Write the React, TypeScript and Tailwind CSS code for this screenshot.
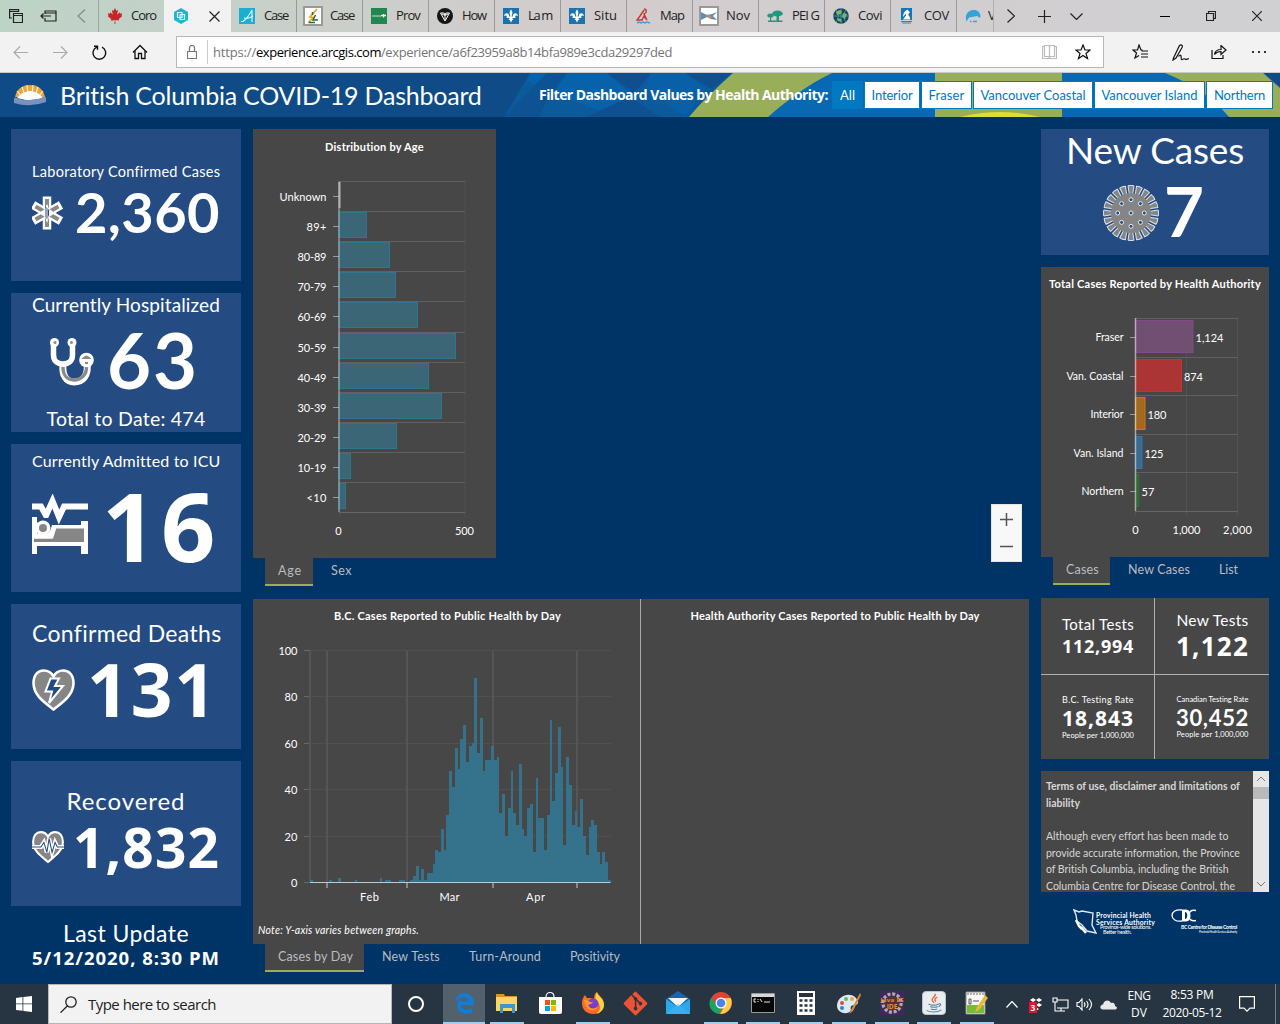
import React, { useLayoutEffect, useRef, useState } from 'react';
import { FaCanadianMapleLeaf, FaEdgeLegacy, FaGitAlt, FaJava } from 'react-icons/fa';

/** Single-line label whose tracking is adjusted so that it fills a given width. */
function Fit({ w, className = '', children }: { w: number; className?: string; children: string }) {
  const ref = useRef<HTMLSpanElement>(null);
  const [gap, setGap] = useState(0);
  useLayoutEffect(() => {
    const el = ref.current;
    if (!el) return;
    const natural = el.getBoundingClientRect().width - gap * children.length;
    setGap((w - natural) / children.length);
  }, [w, children]);
  return (
    <span ref={ref} className={`inline-block shrink-0 whitespace-nowrap ${className}`} style={{ letterSpacing: `${gap}px` }}>
      {children}
    </span>
  );
}

/* ---------- Browser chrome ---------- */

const line = { fill: 'none', stroke: 'currentColor', strokeWidth: 1.2 } as const;

function Fleur() {
  return (
    <svg viewBox="0 0 16 16" className="size-4 bg-[#1a72ae]">
      <path
        fill="#fff"
        d="M8 1.500C6.600 3.200 6.200 4.600 7 6.500l.4 2H6.200C6.400 6.500 5.300 5.300 3.700 5.300 2 5.300 1 6.700 1.300 8.200c.5-.9 1.600-1 2.200-.3.5.6.4 1.500-.2 2h3.300c-.1 1-.6 1.700-1.300 2.200l1.500-.2L8 14.700l1.200-2.800 1.500.2c-.7-.5-1.200-1.200-1.300-2.200h3.300c-.6-.5-.7-1.400-.2-2 .6-.7 1.700-.6 2.200.3.300-1.500-.7-2.900-2.400-2.900-1.600 0-2.700 1.200-2.500 3.200H8.600l.4-2c.8-1.900.4-3.300-1-5z"
      />
    </svg>
  );
}

const tabs: { label: string; w: number; icon: React.ReactNode }[] = [
  {
    label: 'Case',
    w: 24,
    icon: (
      <svg viewBox="0 0 16 16" className="size-4 bg-[#19aed3]">
        <path d="M2 13.500h2c3-2 6-6 9-11.500v12M5 10c3 1 6 0 9-2" fill="none" stroke="#e9fbff" strokeWidth="1.100" />
      </svg>
    ),
  },
  {
    label: 'Case',
    w: 24,
    icon: (
      <svg viewBox="0 0 16 16" className="size-5 shrink-0 border-2 border-[#999] bg-white">
        <path d="M12 1 5 9l3 .5L3 15" fill="none" stroke="#e7a92e" strokeWidth="1.800" />
        <path d="M7.500 4v3M10.500 7 8 12h5M4 14.500h6" fill="none" stroke="#27693d" strokeWidth="1.500" />
      </svg>
    ),
  },
  {
    label: 'Prov',
    w: 24,
    icon: (
      <svg viewBox="0 0 16 16" className="size-4 bg-[#22864f]">
        <path d="M1 8h9" stroke="#bfe3cc" strokeWidth="1" />
        <path d="M10 7.500h5M12.500 6v3.500" stroke="#fff" strokeWidth="1.300" />
      </svg>
    ),
  },
  {
    label: 'How',
    w: 24,
    icon: (
      <svg viewBox="0 0 16 16" className="size-4">
        <circle cx="8" cy="8" r="8" fill="#161616" />
        <path d="M3.500 5h3.600L8 7l.9-2h3.600L8 13zM5 6l3 1.500L11 6M8 7.500V12" fill="none" stroke="#fff" strokeWidth="1" />
      </svg>
    ),
  },
  { label: 'La m', w: 24, icon: <Fleur /> },
  { label: 'Situ', w: 23, icon: <Fleur /> },
  {
    label: 'Map',
    w: 24,
    icon: (
      <svg viewBox="0 0 16 16" className="size-4">
        <path d="M9 1c3 0 3 4 0 5l3 6M9 2 5 8l-3 4h5l2-4 3 4" fill="none" stroke="#c13a36" strokeWidth="1.400" />
        <path d="m2 15 2-1 2 1 2-1 2 1 2-1 3 1" fill="none" stroke="#4a9ad4" strokeWidth="1.500" />
      </svg>
    ),
  },
  {
    label: 'Nov',
    w: 24,
    icon: (
      <svg viewBox="0 0 16 16" className="size-5 shrink-0 border-2 border-[#999] bg-white">
        <path d="M0 4v8l6-3 4 2 6 1-4-4 4-4-5 2-5 1z" fill="#5e8db8" />
        <path d="m6 7 4 3" stroke="#e0864a" strokeWidth="2" />
      </svg>
    ),
  },
  {
    label: 'PEI G',
    w: 27,
    icon: (
      <svg viewBox="0 0 16 16" className="size-4">
        <ellipse cx="10.500" cy="5.500" rx="5.300" ry="3" fill="#1f9a7d" />
        <ellipse cx="3.500" cy="7.500" rx="3.200" ry="2" fill="#1f9a7d" />
        <path d="M9.500 7h2.500v5.500h3.500V14H1v-1.500h2V9h1.200v3.500h5.300z" fill="#1f9a7d" />
      </svg>
    ),
  },
  {
    label: 'Covi',
    w: 24,
    icon: (
      <svg viewBox="0 0 16 16" className="size-4">
        <circle cx="8" cy="8" r="7.800" fill="#174a55" />
        <path d="M3 4c2-2 5-2 6-1L8 6l-4 1zm7 1 4 1-2 5-3-2zM4 10l4 1 1 3-4-1z" fill="#8cb85c" />
        <path d="M8 0v16M0 8h16M3 2c3 4 3 8 0 12M13 2c-3 4-3 8 0 12" fill="none" stroke="#58a8c8" strokeWidth=".7" />
      </svg>
    ),
  },
  {
    label: 'COV',
    w: 25,
    icon: (
      <svg viewBox="0 0 16 16" className="size-4">
        <path d="M2 0h11v12H2z" fill="#1577b5" />
        <path d="M8.500 1.500C6 3 4 5 4 9l3-3.500v2L4 11.500h7c1-3-2.500-3.500-1.500-6l1.500-1z" fill="#fff" />
        <path d="M2 13.500h11M3 15h9" stroke="#2988be" strokeWidth="1" />
      </svg>
    ),
  },
];

function TabBar() {
  return (
    <div className="flex h-8 shrink-0 bg-linear-to-r from-[#bdd3c6] via-[#d3cccd] via-45% to-[#d0d0d2] font-['Open_Sans',sans-serif] text-[13px] text-[#222]">
      <div className="flex w-[98px] items-center pl-[9px]">
        <svg viewBox="0 0 14 14" className="size-[14px]" {...line}>
          <path d="M3 9H.6V.6h9V3M4.500 4.500h9v9h-9zM4.500 6.500h9M.6 2.500h9" />
        </svg>
        <svg viewBox="0 0 17 12" className="ml-[17px] h-3 w-[17px]" {...line}>
          <path d="M5 4V1h11v10H5V8M5 3h11M11 6H1M3.500 3.500 1 6l2.500 2.500" />
        </svg>
        <svg viewBox="0 0 9 14" className="ml-5 h-[14px] w-[9px] text-[#888]" {...line}>
          <path d="M8 .5 1 7l7 6.500" />
        </svg>
      </div>
      <div className="flex w-[66px] items-center border-l border-[#9da5a1] pl-[8px]">
        <FaCanadianMapleLeaf className="size-4 shrink-0 text-[#c9242b]" />
        <Fit w={25} className="ml-[8px]">Coro</Fit>
      </div>
      <div className="flex w-[67px] items-center justify-between bg-[#f2f2f2] pr-[11px] pl-[9px]">
        <svg viewBox="0 0 16 16" className="size-4">
          <path d="m8 0 7 4v8l-7 4-7-4V4z" fill="#1eb5cf" />
          <path d="M4.500 4.500H9v5H4.500zM7 6.500h4.500v5H7z" fill="none" stroke="#d9f8fc" strokeWidth="1.200" />
        </svg>
        <svg viewBox="0 0 11 11" className="size-[11px]" {...line}>
          <path d="m.5.5 10 10M10.500.5l-10 10" />
        </svg>
      </div>
      {tabs.map((t, i) => (
        <div key={i} className="flex w-[66px] items-center border-r border-[#9a9a9c] pl-[8px]">
          <span className="flex w-4 shrink-0 justify-center">{t.icon}</span>
          <Fit w={t.w} className="ml-[9px]">{t.label}</Fit>
        </div>
      ))}
      <div className="flex w-[37px] items-center border-r border-[#b0b0b0] pl-[8px]">
        <svg viewBox="0 0 16 14" className="h-[14px] w-4 shrink-0">
          <path d="M1.500 12.500C-1 5 4 1 9 1c4.500 0 7.500 4 6 8l-3-2-8 1.500z" fill="#35a2d8" />
          <path d="M5 12.500h1.500M8 12.500h4" stroke="#35a2d8" strokeWidth="1.500" />
        </svg>
        <span className="ml-[7px] w-[5px] overflow-hidden">V</span>
      </div>
      <div className="flex flex-1 items-center pl-[13px]">
        <svg viewBox="0 0 8 14" className="h-[14px] w-2" {...line}>
          <path d="m.5.5 7 6.500-7 6.500" />
        </svg>
        <svg viewBox="0 0 13 13" className="ml-[23px] size-[13px]" {...line}>
          <path d="M6.500 0v13M0 6.500h13" />
        </svg>
        <svg viewBox="0 0 13 7" className="ml-[19px] h-[7px] w-[13px]" {...line}>
          <path d="m.5.5 6 6 6-6" />
        </svg>
        <span className="ml-auto h-px w-[10px] bg-black" />
        <svg viewBox="0 0 10 10" className="ml-9 size-[10px]" {...line}>
          <path d="M.5 2.500h7v7h-7zM2.500 2.500v-2h7v7h-2" />
        </svg>
        <svg viewBox="0 0 10 10" className="mr-[18px] ml-9 size-[10px]" {...line}>
          <path d="m0 0 10 10M10 0 0 10" />
        </svg>
      </div>
    </div>
  );
}

function AddressBar() {
  return (
    <div className="flex h-[41px] shrink-0 items-center border-b border-[#c9c9c9] bg-[#f2f2f2] font-['Open_Sans',sans-serif]">
      <svg viewBox="0 0 15 13" className="ml-[13px] h-[13px] w-[15px] text-[#aaa]" {...line}>
        <path d="M15 6.500H1M7 .5l-6 6 6 6" />
      </svg>
      <svg viewBox="0 0 15 13" className="ml-[25px] h-[13px] w-[15px] text-[#aaa]" {...line}>
        <path d="M0 6.500h14M8 .5l6 6-6 6" />
      </svg>
      <svg viewBox="0 0 15 15" className="ml-[24px] size-[15px] text-[#111]" fill="none" stroke="currentColor" strokeWidth="1.400">
        <path d="M4.700 2.200A6.300 6.300 0 1 0 10 2.200M2 1.200h3.500v3.500" />
      </svg>
      <svg viewBox="0 0 16 16" className="ml-[25px] size-4 text-[#111]" fill="none" stroke="currentColor" strokeWidth="1.300">
        <path d="m1 8.500 7-7 7 7M3 7v7.500h3.500v-5h3v5H13V7" />
      </svg>
      <div className="ml-[28px] flex h-8 w-[928px] items-center border border-[#b9b9b9] bg-white">
        <svg viewBox="0 0 10 14" className="ml-[10px] h-[14px] w-[10px] text-[#777]" {...line}>
          <path d="M.5 6.500h9v7h-9zM2.500 6.500V3a2.500 2.500 0 0 1 5 0v3.500" />
        </svg>
        <span className="ml-[10px] h-6 w-px bg-[#ccc]" />
        <span className="ml-[5px] flex pt-px text-[13px] text-[#757575]">
          <Fit w={43}>https://</Fit>
          <Fit w={125} className="text-black">experience.arcgis.com</Fit>
          <Fit w={291}>/experience/a6f23959a8b14bfa989e3cda29297ded</Fit>
        </span>
        <svg viewBox="0 0 15 14" className="ml-auto h-[14px] w-[15px] text-[#bcbcbc]" {...line}>
          <path d="M2 1.500H.5v12h14v-12H13M2.500.5h4l1 1 1-1h4v11h-4l-1 1-1-1h-4zM7.500 1.500v11" />
        </svg>
        <svg viewBox="0 0 16 16" className="mr-[12px] ml-[18px] size-4 text-[#111]" {...line}>
          <path d="m8 1 2 5h5l-4 3.500 1.500 5L8 11.500l-4.500 3L5 9.500 1 6h5z" />
        </svg>
      </div>
      <svg viewBox="0 0 17 16" className="ml-[28px] h-4 w-[17px] text-[#111]" {...line}>
        <path d="M10.500 6H9L7 1 5.500 6H1l3.500 3L3 14l4-2.500M9.500 7H16M9 10h7M9 13h7" />
      </svg>
      <svg viewBox="0 0 17 17" className="ml-[23px] size-[17px] text-[#111]" {...line}>
        <path d="M1.500 14 7.500 1.500c2-1.500 3.500 0 2.500 2L4 14l-3 2zM6.500 12.500c4-4 2 2.500 3 3s2-1.500 3.500-.5 2 .5 4-.5" />
      </svg>
      <svg viewBox="0 0 16 14" className="ml-[22px] h-[14px] w-4 text-[#111]" {...line}>
        <path d="M1 5v8.500h11V10M3.500 9.500C4 6 6 4.500 10 4.500v-4L15 5l-5 4.500v-3C7 6.500 5 7.500 3.500 9.500z" />
      </svg>
      <span className="ml-[25px] flex gap-1">
        <i className="size-[2px] bg-[#333]" />
        <i className="size-[2px] bg-[#333]" />
        <i className="size-[2px] bg-[#333]" />
      </span>
    </div>
  );
}

/* ---------- Dashboard header ---------- */

const filters = [
  { name: 'Interior', box: 'w-[56px]', w: 41 },
  { name: 'Fraser', box: 'w-[51px]', w: 36 },
  { name: 'Vancouver Coastal', box: 'w-[120px]', w: 105 },
  { name: 'Vancouver Island', box: 'w-[111px]', w: 96 },
  { name: 'Northern', box: 'w-[67px]', w: 51 },
];

function Header() {
  return (
    <header className="relative flex h-[44px] shrink-0 items-center bg-[#0f4c87] text-white">
      <svg viewBox="0 0 1280 44" className="absolute inset-0 h-[44px] w-[1280px]">
        <path d="M530 0h750v44H504z" fill="#0b5a9c" />
        <path d="m530 0 77 0 27 24-20 20-60-24-27-12z" fill="#0862aa" />
        <path d="m607 0h44l-17 20z" fill="#0f4f8d" />
        <path d="m547 28 20-28h-20l-43 44h35z" fill="#0d5393" />
        <path d="m585 44 45-20 30 20z" fill="#0f5190" />
        <path d="m685 0 27 16 20-16z" fill="#0f4f8d" />
        <path d="m651 0h34l20 16-20 28-40-30z" fill="#0a60a6" />
        <path d="M733 0c-20 18-34 32-44 44h591V0z" fill="#0868b2" />
        <path d="M733 0h99c-25 12-47 29-64 44h-79C699 32 713 18 733 0z" fill="#98ae58" />
        <path d="M935 0h127v44H935zM1165 0h98l17 15v29h-51q-22-27-64-44z" fill="#98ae58" />
        <path d="M960 44q41-10 80 0z" fill="#d5e03c" />
        <path d="M1264 0h16v14z" fill="#0f4c87" />
      </svg>
      <svg viewBox="0 0 32 22" className="relative ml-[14px] h-[22px] w-8">
        <path d="M1 13C3 4 9 1 16 1s13 3 15 12z" fill="#e9a63c" />
        <path d="m8 13-5-6M11 12 8 3M14 11 13 1M18 11l1-10M21 12l3-9M24 13l5-6" stroke="#fff3d8" strokeWidth="1.100" />
        <path d="M3 14c4-5 9-7 13-7s9 2 13 7l-13 3z" fill="#fff" />
        <path d="M0 14c3-1 5 1 8 1.500s5 1.500 8 .5 5-1 8-1 5-3 8-1.500V18q-16 6-32 1z" fill="#7a90bd" />
      </svg>
      <span className="relative ml-[14px] w-[479px] text-[25px] leading-none">
        <Fit w={422} className="-mt-px">British Columbia COVID-19 Dashboard</Fit>
      </span>
      <span className="relative font-['Open_Sans',sans-serif] text-[14px] leading-none font-bold">
        <Fit w={289}>Filter Dashboard Values by Health Authority:</Fit>
      </span>
      <div className="relative ml-[4px] flex gap-px text-[13px] leading-none">
        <span className="flex h-7 w-[31px] items-center justify-center bg-[#0079c1]">
          <Fit w={15}>All</Fit>
        </span>
        {filters.map((f) => (
          <span key={f.name} className={`flex h-7 items-center justify-center border border-[#0079c1] bg-white text-[#0079c1] ${f.box}`}>
            <Fit w={f.w}>{f.name}</Fit>
          </span>
        ))}
      </div>
    </header>
  );
}

/* ---------- Indicator icons ---------- */

function StarOfLife() {
  return (
    <svg viewBox="0 0 31 34" className="h-[34px] w-[31px]">
      <path d="M15 .5v33M1 9l28 16M1 25 29 9" stroke="#fff" strokeWidth="8.500" />
      <path d="M15 3v28M3.500 10.500l23 13M3.500 23.500l23-13" stroke="#8a8a8a" strokeWidth="4" />
      <path d="m15 8 2 5 6 4-6 4-2 6-2-6-6-4 6-4z" fill="#fff" />
      <path d="M13.500 10v11l1.500 3 2-5v-5z" fill="#254c82" />
      <path d="M15 9v16" stroke="#fff" strokeWidth="1" />
    </svg>
  );
}

function Stethoscope() {
  return (
    <svg viewBox="0 0 44 48" className="h-12 w-11" fill="none">
      <path d="M3.500 5v12c0 6 4 9 9.500 9s9.500-3 9.500-9V5" stroke="#fff" strokeWidth="5.500" />
      <path d="M13 27c-1 10 3 17 11 17s15-5 13-20" stroke="#fff" strokeWidth="7" />
      <path d="M13 29c0 8 4 13 11 13s13-5 12.500-14" stroke="#8a8a8a" strokeWidth="3.400" />
      <circle cx="4.500" cy="4.500" r="4.500" fill="#fff" />
      <circle cx="22" cy="4.500" r="4.500" fill="#fff" />
      <circle cx="5" cy="4.500" r="1.500" fill="#8a8a8a" />
      <circle cx="21.500" cy="4.500" r="1.500" fill="#8a8a8a" />
      <circle cx="36.500" cy="22" r="7.300" fill="#fff" />
      <path d="M31.500 21q5-7 10 0z" fill="#8a8a8a" />
      <path d="M35 24h3v2h-3z" fill="#8a8a8a" />
    </svg>
  );
}

function HospitalBed() {
  return (
    <svg viewBox="0 0 56 60" className="h-[60px] w-14">
      <path d="M0 12.500h9l5 9L20.500 7 27 23l5-10.500h24" fill="none" stroke="#fff" strokeWidth="6" />
      <path d="M0 23h5v5h9v3h35v-4h7v33h-7v-8H5v8H0z" fill="#fff" />
      <path d="M24 34h28v14H2v-3.500h18z" fill="#868686" />
      <path d="M5.500 24h15v5.500l-2 6.500-3 4H5.500z" fill="#254c82" />
      <circle cx="11" cy="34" r="7.500" fill="#fff" />
      <circle cx="11" cy="34" r="4" fill="#868686" />
      <path d="M2 43h18l3-10h29" fill="none" stroke="#fff" strokeWidth="3" />
    </svg>
  );
}

const heart = 'M21.500 40.500C12 33 1.500 26 1.500 14 1.500 6 6 1.500 11.500 1.500c4.500 0 8 2 10 6 2-4 5.500-6 10-6C37 1.500 41.500 6 41.500 14c0 12-10.500 19-20 26.500z';

function HeartBolt() {
  return (
    <svg viewBox="0 0 43 42" className="h-[42px] w-[43px]">
      <path d={heart} fill="#868686" stroke="#fff" strokeWidth="2.600" />
      <path d="M18.500 9.500h8.500l-4 7.500h8L17 34l3-11.500h-6.500z" fill="#254c82" stroke="#fff" strokeWidth="2" />
    </svg>
  );
}

function HeartPulse() {
  return (
    <svg viewBox="0 0 43 42" className="h-[32px] w-[32px]" preserveAspectRatio="none">
      <path d={heart} fill="#868686" stroke="#fff" strokeWidth="2.800" />
      <path d="M0 21h12l4-6 4 13 3-18 4 18 4-13 3 6h9" fill="none" stroke="#fff" strokeWidth="5.500" />
      <path d="M0 21h12l4-6 4 13 3-18 4 18 4-13 3 6h9" fill="none" stroke="#254c82" strokeWidth="1.400" />
    </svg>
  );
}

function Virus() {
  const spikes = Array.from({ length: 20 }, (_, i) => i * 18);
  const dots = Array.from({ length: 8 }, (_, i) => (i * Math.PI) / 4);
  return (
    <svg viewBox="-28 -28 56 56" className="size-14">
      {spikes.map((a) => (
        <path key={a} d="M-1.500-18-3-27.200q3-.9 6 0L1.500-18" fill="#858585" stroke="#dde4ee" strokeWidth="1" transform={`rotate(${a})`} />
      ))}
      <circle r="20" fill="#858585" />
      {dots.map((a) => (
        <circle key={a} cx={13.300 * Math.sin(a)} cy={13.300 * Math.cos(a)} r="2" fill="#254c82" stroke="#e6ebf2" />
      ))}
      <circle r="2" fill="#254c82" stroke="#e6ebf2" />
    </svg>
  );
}

/* ---------- Left column ---------- */

function LeftColumn() {
  return (
    <aside className="flex w-[230px] flex-col gap-3 leading-none text-white">
      <section className="h-[152px] bg-[#254c82] px-[21px] pt-[33px]">
        <div className="flex h-5 items-center text-[14.500px]">
          <Fit w={188}>Laboratory Confirmed Cases</Fit>
        </div>
        <div className="flex h-[62px] items-center">
          <StarOfLife />
          <Fit w={145} className="-mt-[3px] ml-[12px] text-[56px] font-bold">2,360</Fit>
        </div>
      </section>
      <section className="h-[139px] bg-[#254c82] px-[21px]">
        <div className="flex h-[23px] items-center text-[19px]">
          <Fit w={188}>Currently Hospitalized</Fit>
        </div>
        <div className="flex h-[92px] items-center pl-[18px]">
          <Stethoscope />
          <Fit w={92} className="-mt-[4px] ml-[13px] text-[76px] font-bold">63</Fit>
        </div>
        <div className="flex h-6 items-center justify-center pb-[2px] text-[19.500px]">
          <Fit w={159}>Total to Date: 474</Fit>
        </div>
      </section>
      <section className="h-[148px] bg-[#254c82] px-[21px]">
        <div className="flex h-[34px] items-center text-[16px]">
          <Fit w={188}>Currently Admitted to ICU</Fit>
        </div>
        <div className="flex h-[100px] items-center">
          <span className="-mt-2">
            <HospitalBed />
          </span>
          <Fit w={118} className="-mt-[5px] ml-[14px] font-['Open_Sans',sans-serif] text-[95px] font-bold">16</Fit>
        </div>
      </section>
      <section className="h-[145px] bg-[#254c82] px-[21px] pt-[13px]">
        <div className="flex h-[32px] items-center text-[23px]">
          <Fit w={189}>Confirmed Deaths</Fit>
        </div>
        <div className="flex h-[81px] items-center">
          <HeartBolt />
          <Fit w={131} className="-mt-[2px] ml-[12px] font-['Open_Sans',sans-serif] text-[73px] font-bold">131</Fit>
        </div>
      </section>
      <section className="h-[145px] bg-[#254c82] px-[21px] pt-[26px]">
        <div className="flex h-[27px] items-center justify-center text-[24px]">
          <Fit w={119}>Recovered</Fit>
        </div>
        <div className="flex h-[66px] items-center">
          <HeartPulse />
          <Fit w={147} className="-mt-[2px] ml-[9px] font-['Open_Sans',sans-serif] text-[55px] font-bold">1,832</Fit>
        </div>
      </section>
      <section className="flex flex-col items-center pt-[3px]">
        <div className="flex h-[24px] items-center text-[23px]">
          <Fit w={126}>Last Update</Fit>
        </div>
        <div className="flex h-[26px] items-center font-['Open_Sans',sans-serif] text-[18.500px] font-bold">
          <Fit w={188}>5/12/2020, 8:30 PM</Fit>
        </div>
      </section>
    </aside>
  );
}

/* ---------- Charts ---------- */

function Label({ x, y, w, end, children, size = 11 }: { x: number; y: number; w?: number; end?: 'start' | 'middle' | 'end'; children: string; size?: number }) {
  return (
    <text x={x} y={y} textLength={w} textAnchor={end ?? 'end'} fontSize={size} fill="#fff">
      {children}
    </text>
  );
}

const ages: [string, number, number][] = [
  ['Unknown', 0, 47],
  ['89+', 27.500, 20],
  ['80-89', 50.500, 29],
  ['70-79', 56.500, 29],
  ['60-69', 78.500, 29],
  ['50-59', 116.500, 29],
  ['40-49', 89.500, 29],
  ['30-39', 102.500, 29],
  ['20-29', 57.500, 29],
  ['10-19', 11.500, 29],
  ['<10', 6.500, 20],
];

function AgeChart() {
  return (
    <svg viewBox="253 161 243 397" className="h-[397px] w-[243px]">
      <path d="M339.500 181v336M465 181v336" stroke="#505050" strokeWidth="1" />
      {ages.map(([name, w, tw], i) => {
        const y = Math.round(181 + i * 30.100);
        return (
          <g key={name}>
            <path d={`M339 ${y + 0.5}H465`} stroke="#606060" />
            {w > 0 && <rect x="339" y={y + 1.500} width={w} height="25" fill="#3b6676" stroke="#2f7491" />}
            <path d={`M333 ${y + 15.500}h6`} stroke="#999" />
            <Label x={326.500} y={y + 19.500} w={tw}>{name}</Label>
          </g>
        );
      })}
      <path d="M339 512.500H465" stroke="#666" />
      <path d="M339 181.500V512" stroke="#fff" strokeOpacity=".4" strokeWidth="1.500" />
      <path d="M339.500 182v26" stroke="#b4b4b4" strokeWidth="2" />
      <Label x={338.500} y={535} end="middle">0</Label>
      <Label x={464.500} y={535} w={19} end="middle">500</Label>
    </svg>
  );
}

const authorities = [
  { name: 'Fraser', tw: 28, w: 57.500, value: '1,124', vw: 28, fill: '#714f72', edge: '#834b87' },
  { name: 'Van. Coastal', tw: 57, w: 46, value: '874', vw: 19, fill: '#ab3535', edge: '#d92a2b' },
  { name: 'Interior', tw: 33, w: 9.500, value: '180', vw: 19, fill: '#a2691f', edge: '#cb7a12' },
  { name: 'Van. Island', tw: 50, w: 6.500, value: '125', vw: 19, fill: '#3b6a91', edge: '#3278b0' },
  { name: 'Northern', tw: 42, w: 3.500, value: '57', vw: 13, fill: '#37653a', edge: '#2f6f34' },
];

function AuthorityChart() {
  return (
    <svg viewBox="1041 299 228 258" className="h-[258px] w-[228px]">
      <path d="M1135.500 318v198M1186.500 318v198M1237.500 318v198" stroke="#525252" />
      {authorities.map((a, i) => {
        const y = Math.round(318 + i * 38.600);
        return (
          <g key={a.name}>
            <path d={`M1135 ${y + 0.5}h103`} stroke="#606060" />
            <rect x="1135.500" y={y + 2.500} width={a.w} height="32" fill={a.fill} stroke={a.edge} />
            <path d={`M1130 ${y + 19.500}h6`} stroke="#999" />
            <Label x={1123.500} y={y + 23} w={a.tw} size={10.500}>{a.name}</Label>
            <Label x={1138 + a.w} y={y + 24} w={a.vw} end="start">{a.value}</Label>
          </g>
        );
      })}
      <path d="M1135 511.500h103" stroke="#666" />
      <path d="M1135.500 318v193" stroke="#fff" strokeOpacity=".5" strokeWidth="1.500" />
      <Label x={1135.500} y={534} end="middle">0</Label>
      <Label x={1186.500} y={534} w={28} end="middle">1,000</Label>
      <Label x={1237.500} y={534} w={29} end="middle">2,000</Label>
    </svg>
  );
}

const daily = [
  1, 0, 0, 0, 0, 0, 0, 1, 0, 0, 2, 0, 0, 0, 0, 0, 1, 0, 0, 0, 0, 0, 0, 0, 0, 2, 0, 1, 1, 0, 0, 0, 1, 1, 0, 0, 1, 3, 7, 1, 6, 1, 4, 4, 8, 14, 13, 23,
  14, 29, 48, 41, 58, 49, 62, 68, 52, 59, 60, 88, 56, 71, 48, 53, 53, 59, 53, 54, 30, 38, 20, 32, 48, 30, 25, 51, 23, 20, 32, 34, 13, 45, 28, 28, 14,
  29, 70, 35, 47, 67, 50, 16, 54, 42, 25, 31, 24, 36, 20, 12, 24, 27, 25, 13, 8, 13, 9, 1,
];

function DailyChart() {
  return (
    <svg viewBox="253 631 387 285" className="h-[285px] w-[387px]">
      {[0, 20, 40, 60, 80, 100].map((v) => {
        const y = Math.round(882 - v * 2.320) + 0.5;
        return (
          <g key={v}>
            <path d={`M310 ${y}h301`} stroke="#505050" />
            <path d={`M304 ${y}h6`} stroke="#686868" />
            <Label x={297.500} y={y + 4.500} w={v === 100 ? 19 : v ? 13 : undefined}>{String(v)}</Label>
          </g>
        );
      })}
      <path d="M310 651v232M327 651v232M407 651v232M493 651v232M577 651v232" stroke="#555" strokeWidth="2" />
      {daily.map((v, i) => {
        if (!v) return null;
        const x = Math.round(310 + i * 2.785);
        const next = Math.round(310 + (i + 1) * 2.785);
        const top = Math.round(882.500 - v * 2.320);
        return (
          <g key={i}>
            <rect x={x} y={top} width={next - x} height={882.500 - top} fill="#37728a" />
            <rect x={x} y={top} width="1" height={882.500 - top} fill="#30738f" />
          </g>
        );
      })}
      <path d="M310 882.500h300.500" stroke="#b5cdd6" />
      <path d="M327 883v5M407 883v5M493 883v5M577 883v5" stroke="#888" strokeWidth="2" />
      <Label x={369.500} y={901} w={19} end="middle">Feb</Label>
      <Label x={449.500} y={901} w={20} end="middle">Mar</Label>
      <Label x={535.500} y={901} w={19} end="middle">Apr</Label>
    </svg>
  );
}

function TabStrip({ items, gap }: { items: [string, number][]; gap: string }) {
  return (
    <div className={`flex h-7 items-start pl-3 text-[12.500px] leading-none text-[#b9bcc0] ${gap}`}>
      {items.map(([name, w], i) => (
        <span
          key={name}
          className={i === 0 ? 'flex h-7 items-center border-b-2 border-[#9aae58] bg-[#474747] pt-px pr-[11px] pl-[13px]' : 'flex h-[26px] items-center pt-px'}
        >
          <Fit w={w}>{name}</Fit>
        </span>
      ))}
    </div>
  );
}

/* ---------- Middle column ---------- */

function MiddleColumn() {
  return (
    <main className="flex w-[776px] flex-col">
      <div className="flex justify-between">
        <div className="w-[243px]">
          <section className="h-[429px] bg-[#474747] text-white">
            <h2 className="flex h-8 items-center justify-center pt-[2px] text-[11px] leading-none font-bold">
              <Fit w={99}>Distribution by Age</Fit>
            </h2>
            <AgeChart />
          </section>
          <TabStrip items={[['Age', 24], ['Sex', 21]]} gap="gap-[18px]" />
        </div>
        <div className="mt-[375px] mr-[7px] flex h-[58px] w-[31px] flex-col items-center justify-around border border-[#e4e4e4] bg-[#f8f8f8]">
          <svg viewBox="0 0 13 13" className="size-[13px]">
            <path d="M6.500 0v13M0 6.500h13" stroke="#555" strokeWidth="1.500" />
          </svg>
          <svg viewBox="0 0 13 13" className="-mt-[3px] size-[13px]">
            <path d="M0 6.500h13" stroke="#555" strokeWidth="1.500" />
          </svg>
        </div>
      </div>
      <section className="mt-[13px] flex h-[345px] bg-[#474747] text-white">
        <div className="flex w-[388px] flex-col border-r border-[#a9a9a9]">
          <h2 className="flex h-8 items-center pl-[81px] text-[11px] leading-none font-bold">
            <Fit w={227}>B.C. Cases Reported to Public Health by Day</Fit>
          </h2>
          <DailyChart />
          <p className="flex h-[28px] items-center pl-[5px] text-[10.500px] leading-none italic">
            <Fit w={161}>Note: Y-axis varies between graphs.</Fit>
          </p>
        </div>
        <h2 className="flex h-8 flex-1 items-center justify-center text-[11px] leading-none font-bold">
          <Fit w={289}>Health Authority Cases Reported to Public Health by Day</Fit>
        </h2>
      </section>
      <TabStrip items={[['Cases by Day', 75], ['New Tests', 58], ['Turn-Around', 72], ['Positivity', 50]]} gap="gap-[29px] [&>:first-child]:-mr-[11px]" />
    </main>
  );
}

/* ---------- Right column ---------- */

function RightColumn() {
  return (
    <aside className="flex w-[228px] flex-col leading-none text-white">
      <section className="h-[126px] bg-[#254c82]">
        <div className="flex h-[45px] items-center justify-center pb-[4px] text-[37px]">
          <Fit w={178}>New Cases</Fit>
        </div>
        <div className="flex h-[77px] items-center pl-[62px]">
          <Virus />
          <Fit w={40} className="-mt-[5px] ml-[5px] text-[69px] font-bold">7</Fit>
        </div>
      </section>
      <section className="mt-3 h-[290px] bg-[#474747]">
        <h2 className="flex h-8 items-center justify-center text-[11px] font-bold">
          <Fit w={212}>Total Cases Reported by Health Authority</Fit>
        </h2>
        <AuthorityChart />
      </section>
      <TabStrip items={[['Cases', 33], ['New Cases', 62], ['List', 19]]} gap="gap-[29px] [&>:first-child]:-mr-[11px]" />

      <section className="mt-[13px] grid h-[161px] grid-cols-[114px_114px] grid-rows-[77px_84px] bg-[#474747]">
        <div className="flex flex-col items-center border-r border-b border-[#b0b0b0] pt-[16px] pl-px">
          <div className="flex h-5 items-center text-[15px]"><Fit w={72}>Total Tests</Fit></div>
          <div className="flex h-[23px] items-center font-['Open_Sans',sans-serif] text-[18px] font-bold"><Fit w={72}>112,994</Fit></div>
        </div>
        <div className="flex flex-col items-center border-b border-[#b0b0b0] pt-[13px] pl-px">
          <div className="flex h-5 items-center text-[15.500px]"><Fit w={72}>New Tests</Fit></div>
          <div className="flex h-[29px] items-center font-['Open_Sans',sans-serif] text-[26px] font-bold"><Fit w={73}>1,122</Fit></div>
        </div>
        <div className="flex flex-col items-center border-r border-[#b0b0b0] pt-[18px] pl-px">
          <div className="flex h-3 items-center text-[9px]"><Fit w={72}>B.C. Testing Rate</Fit></div>
          <div className="flex h-[26px] items-center font-['Open_Sans',sans-serif] text-[21px] font-bold"><Fit w={72}>18,843</Fit></div>
          <div className="flex h-[10px] items-center text-[7.500px]"><Fit w={72}>People per 1,000,000</Fit></div>
        </div>
        <div className="flex flex-col items-center pt-[19px] pl-px">
          <div className="flex h-3 items-center text-[7.500px]"><Fit w={72}>Canadian Testing Rate</Fit></div>
          <div className="flex h-[24px] items-center text-[22px] font-bold"><Fit w={73}>30,452</Fit></div>
          <div className="flex h-[10px] items-center text-[7.500px]"><Fit w={72}>People per 1,000,000</Fit></div>
        </div>
      </section>

      <section className="mt-3 flex h-[121px] overflow-hidden bg-[#474747]">
        <div className="flex h-[140px] flex-1 flex-col items-start pt-[7px] pl-[5px] text-[10.500px] leading-[16.600px] text-[#d6d6d6]">
          <Fit w={194} className="h-[16.600px] font-bold">Terms of use, disclaimer and limitations of</Fit>
          <Fit w={34} className="mb-[17px] h-[16.600px] font-bold">liability</Fit>
          <Fit w={182} className="h-[16.600px]">Although every effort has been made to</Fit>
          <Fit w={194} className="h-[16.600px]">provide accurate information, the Province</Fit>
          <Fit w={183} className="h-[16.600px]">of British Columbia, including the British</Fit>
          <Fit w={189} className="h-[16.600px]">Columbia Centre for Disease Control, the</Fit>
        </div>
        <div className="flex w-4 flex-col items-center bg-[#e6e6e6]">
          <svg viewBox="0 0 16 16" className="size-4 shrink-0"><path d="m4 10 4-4 4 4" fill="none" stroke="#777" /></svg>
          <span className="h-3 w-4 bg-[#b9b9b9]" />
          <svg viewBox="0 0 16 16" className="mt-auto size-4 shrink-0"><path d="m4 6 4 4 4-4" fill="none" stroke="#777" /></svg>
        </div>
      </section>

      <div className="mt-[17px] flex pl-8">
        <svg viewBox="0 0 24 27" className="h-[27px] w-6">
          <path d="m1 1 5 2 3-1 11 2-1 12 4 8-9-2-5-6-5-4-1-6z" fill="none" stroke="#dfe8f2" strokeWidth="1.400" />
          <path d="m3 11 3 6 3 3M8 18l5 6" stroke="#fff" strokeWidth="2.500" fill="none" />
        </svg>
        <div className="-ml-px flex w-[60px] flex-col items-start pt-[3px] text-[6.800px] leading-[6.500px] font-bold">
          <Fit w={55}>Provincial Health</Fit>
          <Fit w={59}>Services Authority</Fit>
          <span className="flex flex-col items-start pl-1 text-[5.500px] leading-[5px] font-normal">
            <Fit w={51}>Province-wide solutions.</Fit>
            <Fit w={28} className="ml-[3px]">Better health.</Fit>
          </span>
        </div>
        <div className="ml-[15px] w-[67px]">
          <svg viewBox="0 0 26 13" className="h-[13px] w-[26px]">
            <path d="M11 1C5 0 1 3 1 6.500S5 13 11 12" fill="none" stroke="#fff" strokeWidth="1.300" />
            <path d="M11 .5h4c6 0 6 12 0 12h-4z" fill="#fff" />
            <path d="M14 3v7c3 0 3-7 0-7z" fill="#003366" />
            <path d="M25 1.500C15-1 15 14 25 11.500" fill="none" stroke="#fff" strokeWidth="1.500" />
          </svg>
          <div className="flex flex-col items-start pt-[3px] pl-[10px] leading-[5px]">
            <Fit w={56} className="text-[5px] font-bold">BC Centre for Disease Control</Fit>
            <Fit w={38} className="ml-[18px] text-[3px] leading-[4px]">Provincial Health Services Authority</Fit>
          </div>
        </div>
      </div>
    </aside>
  );
}

/* ---------- Taskbar ---------- */

const apps: { name: string; running: boolean; icon: React.ReactNode }[] = [
  { name: 'explorer', running: true, icon: (
    <svg viewBox="0 0 24 24" className="size-6"><path d="M1 3h8l1 2h12v3H1z" fill="#d9961d" /><path d="M1 6h21v14H1z" fill="#fbd468" /><path d="M5 22v-9h15v9h-3v-5H8v5z" fill="#3b96d2" /></svg>
  ) },
  { name: 'store', running: false, icon: (
    <svg viewBox="0 0 24 24" className="size-6"><path d="M8 6c0-6 8-6 8 0" fill="none" stroke="#fff" strokeWidth="1.200" /><path d="M1 6h23v15q0 2-2 2H3q-2 0-2-2z" fill="#fff" /><path d="M7 9h5v5H7z" fill="#f25022" /><path d="M13 9h5v5h-5z" fill="#7fba00" /><path d="M7 15h5v5H7z" fill="#00a4ef" /><path d="M13 15h5v5h-5z" fill="#ffb900" /></svg>
  ) },
  { name: 'firefox', running: true, icon: (
    <svg viewBox="0 0 24 24" className="size-6"><path d="M1 12c0-3 1-6 3-8l2 3h3l4 1c0-4 1-6 3-7 1 3 7 6 7 12 0 6-5 10-11 10S1 19 1 12z" fill="#ff6a2b" /><path d="M16 1c0 4 7 6 7 13 0 5-4 8-8 9 4-3 5-6 3-10-3-5-5-6-2-12z" fill="#ffd43c" /><circle cx="12" cy="13" r="5.500" fill="#7a3ccc" /><path d="M3 9c3-1 5 3 9 2-2 3-4 2-5 3 2 5 8 4 10 1-1 6-12 7-14-6z" fill="#ff9a26" /></svg>
  ) },
  { name: 'git', running: false, icon: <FaGitAlt className="size-[27px] text-[#ee5232]" /> },
  { name: 'mail', running: false, icon: (
    <svg viewBox="0 0 24 24" className="size-6"><path d="m0 8 12-8 12 8v14H0z" fill="#1267b4" /><path d="M2 7h20l-10 9z" fill="#f5f5f5" /><path d="m0 8 12 8 12-8v15H0z" fill="#29a9ea" /><path d="m0 23 12-10 12 10z" fill="#3db8f3" opacity=".6" /></svg>
  ) },
  { name: 'chrome', running: true, icon: (
    <svg viewBox="0 0 24 24" className="size-6"><circle cx="12" cy="12" r="11" fill="#dc4437" /><path d="M2.500 6.500 8 15l5 0-2 8C1 22-2 13 2.500 6.500z" fill="#1ca261" /><path d="M12 7h9.800C25 15 19 23 11 23l5-9z" fill="#fdce44" /><circle cx="12" cy="12" r="5.500" fill="#fff" /><circle cx="12" cy="12" r="4.300" fill="#4a83ec" /></svg>
  ) },
  { name: 'terminal', running: true, icon: (
    <svg viewBox="0 0 24 20" className="h-5 w-6"><path d="M.5.5h23v19H.5z" fill="#080808" stroke="#999" /><path d="M1 1h22v3H1z" fill="#d7d7d7" /><path d="M5 6H3v3h2M7 6v1M7 8v1M9 6l2 3M13 9h6" fill="none" stroke="#fff" strokeWidth=".9" /></svg>
  ) },
  { name: 'calculator', running: true, icon: (
    <svg viewBox="0 0 18 24" className="h-6 w-[18px]"><path d="M0 0h18v24H0z" fill="#fff" /><path d="M2 2h14v4H2z" fill="#273541" /><path d="M2.500 9.500h3m2 0h3m2 0h3M2.500 14.500h3m2 0h3m2 0h3M2.500 19.500h3m2 0h3m2 0h3" stroke="#273541" strokeWidth="2.500" /></svg>
  ) },
  { name: 'paint', running: true, icon: (
    <svg viewBox="0 0 26 24" className="h-6 w-[26px]"><path d="M1 15C1 5 13 1 19 6c4 4 4 7 0 8-4 0-5 2-4 5-3 6-14 3-14-4z" fill="#d8eaf4" /><circle cx="6" cy="12" r="2" fill="#e44840" /><circle cx="10" cy="8" r="2" fill="#77b442" /><circle cx="16" cy="8" r="2" fill="#e8aa34" /><circle cx="6" cy="17" r="2" fill="#3282cc" /><path d="M24 2 15 19l-2 4 4-3L25 4z" fill="#d9893c" /></svg>
  ) },
  { name: 'ide', running: true, icon: (
    <svg viewBox="0 0 24 24" className="size-6"><path d="M0 0h24v24H0z" fill="#42275c" /><circle cx="12" cy="12" r="9" fill="none" stroke="#ababaf" strokeWidth="3.500" strokeDasharray="3 1.700" /><circle cx="12" cy="12" r="7.500" fill="#50323c" /><text x="12" y="11" fontSize="6" fontWeight="bold" textAnchor="middle" fill="#f38a2e" textLength="23">Java EE</text><text x="12" y="17.500" fontSize="6.500" fontWeight="bold" textAnchor="middle" fill="#f38a2e">IDE</text></svg>
  ) },
  { name: 'java', running: true, icon: (
    <span className="flex size-6 items-center justify-center rounded-sm border border-[#b9c4ca] bg-[#e9edef]">
      <svg viewBox="0 0 24 24" className="size-[22px]" fill="none">
        <path d="M13 2c2 3-4 4-3 7 0 1 2 2 2 3M15.500 5.500c-3 1.500-3 3-1.500 5" stroke="#e8662d" strokeWidth="1.500" />
        <path d="M6 13c3 1.500 8 1.500 11 0M8 16c3 1 5 1 8 0M8.500 18.500c3 1 4 1 7 0M4 20c3 2.500 12 2.500 16-.5M17 13c3-1 3 2 0 3" stroke="#5a84a6" strokeWidth="1.300" />
      </svg>
    </span>
  ) },
  { name: 'notepad', running: true, icon: (
    <svg viewBox="0 0 24 24" className="size-6"><path d="M1 1h19v22H1z" fill="#f6f7f3" stroke="#888" /><path d="M2 14h17v8H2z" fill="#73bd3a" /><path d="M2 3h17" stroke="#666" strokeDasharray="2 1" /><path d="M4 8h2v5H4zM8 10h6" fill="none" stroke="#555" /><path d="m20 4 3 3-9 12-4 2 2-5z" fill="#e8b93b" /></svg>
  ) },
];

function Taskbar() {
  return (
    <footer className="flex h-10 shrink-0 items-center bg-[#263541] font-['Open_Sans',sans-serif] text-white">
      <div className="flex w-12 justify-center">
        <svg viewBox="0 0 16 16" className="size-4" fill="#fff"><path d="m0 2 6.500-.9v6.400H0zM7.300 1 16 0v7.500H7.300zM0 8.300h6.500v6.500L0 14zM7.300 8.300H16V16l-8.700-1z" /></svg>
      </div>
      <div className="flex h-10 w-[344px] items-center border border-[#b7b7b7] bg-[#f2f2f2] pl-[11px] text-[#222]">
        <svg viewBox="0 0 17 17" className="size-[17px]" fill="none" stroke="#222" strokeWidth="1.300"><circle cx="11" cy="6" r="5.200" /><path d="m7.500 9.700-7 7" /></svg>
        <Fit w={128} className="ml-[11px] text-[15px]">Type here to search</Fit>
      </div>
      <div className="flex w-[51px] justify-center">
        <span className="-ml-[3px] size-4 rounded-full border-[2.500px] border-white" />
      </div>
      <div className="mr-px flex h-10 w-[42px] flex-col items-center justify-between border-b-2 border-[#9bd0f6] bg-[#52616c] pt-[9px]">
        <FaEdgeLegacy className="size-[21px] text-[#0f7edb]" />
      </div>
      {apps.map((a) => (
        <div key={a.name} className="flex h-10 w-[42.700px] flex-col items-center">
          <span className="flex h-[38px] items-center">{a.icon}</span>
          {a.running && <span className="h-0.5 w-[34px] bg-[#9bd0f6]" />}
        </div>
      ))}
      <div className="ml-auto flex h-10 items-center">
        <svg viewBox="0 0 12 7" className="h-[7px] w-3" fill="none" stroke="#fff" strokeWidth="1.200"><path d="m.5 6.500 5.500-6 5.500 6" /></svg>
        <svg viewBox="0 0 16 17" className="ml-[10px] h-[17px] w-4"><path d="m5 2 3 2-3 2-3-2zM11 2l3 2-3 2-3-2zM11 7l3 2-3 2-3-2zM8 11l3 2-3 2z" fill="#fff" /><path d="M1 6h8v11H1z" fill="#e0162b" /><text x="5" y="14.500" fill="#fff" fontSize="8" fontWeight="bold" textAnchor="middle">3</text></svg>
        <svg viewBox="0 0 17 15" className="ml-[8px] h-[15px] w-[17px]" fill="none" stroke="#fff" strokeWidth="1.100"><path d="M5 3h11v8H5M9 11v3M6 14h7M1 1h4v4H1zM3 5v9h3" /></svg>
        <svg viewBox="0 0 17 13" className="ml-[7px] h-[13px] w-[17px]" fill="none" stroke="#fff" strokeWidth="1.100"><path d="M1 4.500h2L6 1v11L3 8.500H1zM8 4.500q2 2 0 4M10.500 3q3 3.500 0 7M13 1q5 5.500 0 11" /></svg>
        <svg viewBox="0 0 17 11" className="ml-[7px] h-[11px] w-[17px]"><path d="M3 10.500c-4 0-3-5 0-5C4 1 9 0 11 4c3-1 4 1 4 3 3 1 2 3.500 0 3.500z" fill="#e7e9eb" /></svg>
        <div className="ml-[10px] flex w-6 flex-col items-center text-[12px] leading-[17px]">
          <Fit w={23}>ENG</Fit>
          <Fit w={16}>DV</Fit>
        </div>
        <div className="ml-[11px] flex w-[60px] flex-col items-center text-[12px] leading-[18px]">
          <Fit w={43}>8:53 PM</Fit>
          <Fit w={59}>2020-05-12</Fit>
        </div>
        <svg viewBox="0 0 16 16" className="ml-[17px] size-4" fill="none" stroke="#fff" strokeWidth="1.200"><path d="M.6.6h14.800v11.500H11l-3 3-3-3H.6z" /></svg>
        <span className="ml-5 h-10 w-px bg-[#74808a]" />
        <span className="w-1" />
      </div>
    </footer>
  );
}

export default function App() {
  return (
    <div className="flex h-[1024px] w-[1280px] flex-col overflow-hidden bg-[#003366] font-[Lato,sans-serif]">
      <TabBar />
      <AddressBar />
      <Header />
      <div className="flex h-[867px] shrink-0 gap-3 pt-3 pl-[11px]">
        <LeftColumn />
        <MiddleColumn />
        <RightColumn />
      </div>
      <Taskbar />
    </div>
  );
}
